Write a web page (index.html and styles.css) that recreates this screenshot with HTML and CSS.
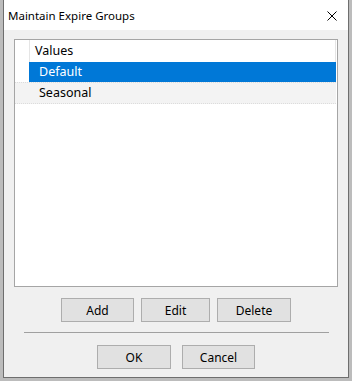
FILE: index.html
```
<!DOCTYPE html>
<html lang="en">
<head>
    <meta charset="UTF-8">
    <title>Maintain Expire Groups</title>
    <link rel="stylesheet" href="styles.css">
</head>
<body>

    <div class="dialog">
        <div class="title-bar">
            <span class="title">Maintain Expire Groups</span>
            <span class="close">
                <svg width="10" height="10" viewBox="0 0 10 10">
                    <path d="M0.5 0.5 L9.5 9.5 M9.5 0.5 L0.5 9.5" stroke="#000" stroke-width="1" fill="none"/>
                </svg>
            </span>
        </div>

        <div class="dialog-body">
            <div class="list-box">
                <div class="list-header">
                    <div class="gutter"></div>
                    <div class="header-cell">Values</div>
                </div>
                <div class="list-row selected"><span>Default</span></div>
                <div class="list-row alt"><span>Seasonal</span></div>
            </div>

            <div class="button-row edit-buttons">
                <button class="btn btn-add">Add</button>
                <button class="btn btn-edit">Edit</button>
                <button class="btn btn-delete">Delete</button>
            </div>

            <div class="separator"></div>

            <div class="button-row">
                <button class="btn btn-ok">OK</button>
                <button class="btn btn-cancel">Cancel</button>
            </div>
        </div>
    </div>

</body>
</html>
```

FILE: styles.css
```
body {
    margin: 0;
    background-color: #bcbcbc;
    font-family: "Noto Sans", Arial, sans-serif;
    font-size: 12px;
    color: #000;
}
.dialog {
    margin-left: 3px;
    width: 344px;
    height: 377px;
    border: 1px solid #6e6e6e;
    border-top: none;
    background-color: #f0f0f0;
    display: flex;
    flex-direction: column;
}
.title-bar {
    height: 30px;
    background-color: #ffffff;
    display: flex;
    align-items: center;
    justify-content: space-between;
    padding: 0 11px 0 4px;
}
.title {
    font-size: 11.5px;
    color: #000;
}
.close {
    display: flex;
    padding-top: 1px;
}
.dialog-body {
    padding: 9px 10px 0 10px;
}
.list-box {
    height: 246px;
    border: 1px solid #a5a5a5;
    background-color: #ffffff;
    font-size: 12.5px;
}
.list-header {
    display: flex;
    height: 22px;
}
.gutter {
    width: 14px;
    border-right: 1px solid #e5e5e5;
}
.header-cell {
    flex: 1;
    padding-left: 5px;
    line-height: 22px;
    border-right: 1px solid #e5e5e5;
    margin-right: 1px;
}
.list-row {
    height: 20px;
    line-height: 20px;
    margin-right: 1px;
}
.list-row span {
    padding-left: 24px;
}
.list-row.selected {
    margin-left: 14px;
    background-color: #0078d7;
    color: #ffffff;
}
.list-row.selected span {
    padding-left: 10px;
}
.list-row.alt {
    height: 20px;
    background-color: #f3f3f3;
    border-top: 1px dotted #dcdcdc;
    border-bottom: 1px dotted #dcdcdc;
}
.button-row {
    display: flex;
    justify-content: center;
    gap: 8px;
    margin-top: 11px;
}
.edit-buttons {
    gap: 7px;
}
.btn {
    height: 24px;
    background-color: #e1e1e1;
    border: 1px solid #adadad;
    font-family: "Noto Sans", Arial, sans-serif;
    font-size: 12px;
    color: #000;
    padding: 0;
}
.btn-add { width: 73px; }
.btn-edit { width: 69px; }
.btn-delete { width: 74px; }
.btn-ok { width: 74px; }
.btn-cancel { width: 73px; margin-left: 3px; }
.separator {
    height: 1px;
    background-color: #a0a0a0;
    margin: 10px 9px 0 10px;
}
.separator + .button-row {
    margin-top: 12px;
}
```
